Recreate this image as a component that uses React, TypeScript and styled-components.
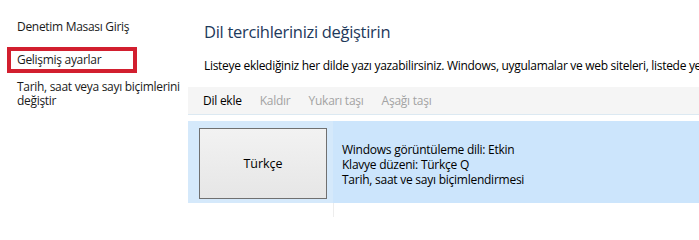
import styled, { createGlobalStyle } from "styled-components";

const GlobalStyle = createGlobalStyle`
  html, body {
    margin: 0;
    padding: 0;
    background: #ffffff;
  }
  body {
    font-family: "Open Sans", "Noto Sans", "Liberation Sans", sans-serif;
    font-size: 12px;
    color: #000000;
  }
`;

const Page = styled.div`
  width: 699px;
  height: 217px;
  overflow: hidden;
  display: grid;
  grid-template-columns: 188px 1fr;
`;

const Nav = styled.nav`
  display: flex;
  flex-direction: column;
  padding-top: 20px;
`;

const NavLink = styled.div<{ $highlighted?: boolean }>`
  font-size: 12px;
  line-height: 14px;
  color: #1a1a1a;
  letter-spacing: -0.3px;
  padding-left: ${(p) => (p.$highlighted ? "6px" : "17px")};
  ${(p) =>
    p.$highlighted
      ? `
    margin: 13px 0 0 7px;
    width: 130px;
    height: 26px;
    box-sizing: border-box;
    border: 4px solid #d21f2f;
    display: flex;
    align-items: center;
  `
      : ""}
`;

const WrapLink = styled(NavLink)`
  margin-top: 7px;
  width: 170px;
`;

const Content = styled.main`
  display: flex;
  flex-direction: column;
  min-width: 0;
`;

const Title = styled.h1`
  margin: 22px 0 0 16px;
  font-size: 16.5px;
  line-height: 20px;
  font-weight: 400;
  color: #1e395b;
  letter-spacing: -0.3px;
`;

const Intro = styled.p`
  margin: 16px 0 0 16px;
  line-height: 15px;
  white-space: nowrap;
  letter-spacing: -0.3px;
`;

const Toolbar = styled.div`
  margin-top: 14px;
  height: 27px;
  background: #f5f5f5;
  border-bottom: 1px solid #dce9f2;
  display: flex;
  align-items: center;
  gap: 18px;
  padding-left: 15px;
`;

const ToolButton = styled.span<{ $disabled?: boolean }>`
  color: ${(p) => (p.$disabled ? "#a3a3a3" : "#000000")};
  letter-spacing: -0.25px;
`;

const Table = styled.div`
  margin-top: 6px;
  flex: 1;
  display: grid;
  grid-template-columns: 145px 1fr;
  grid-template-rows: 82px 1fr;
`;

const LangCell = styled.div`
  background: #d5e9fb;
  padding: 7px 6px 4px 11px;
  display: flex;
`;

const InfoCell = styled.div`
  background: #cce5fc;
  padding: 21px 0 0 9px;
  display: flex;
  flex-direction: column;
`;

const InfoLine = styled.div`
  line-height: 15px;
  white-space: nowrap;
  letter-spacing: -0.25px;
`;

const LangButton = styled.div`
  width: 128px;
  height: 71px;
  box-sizing: border-box;
  border: 1px solid #707070;
  background: linear-gradient(#f2f2f2, #e6e6e6);
  display: flex;
  align-items: center;
  justify-content: center;
  font-size: 12.5px;
`;

const EmptyCell = styled.div<{ $divider?: boolean }>`
  border-left: ${(p) => (p.$divider ? "1px solid #ededed" : "none")};
`;

export default function App() {
  return (
    <>
      <GlobalStyle />
      <Page>
        <Nav>
          <NavLink>Denetim Masası Giriş</NavLink>
          <NavLink $highlighted>Gelişmiş ayarlar</NavLink>
          <WrapLink>Tarih, saat veya sayı biçimlerini değiştir</WrapLink>
        </Nav>
        <Content>
          <Title>Dil tercihlerinizi değiştirin</Title>
          <Intro>
            Listeye eklediğiniz her dilde yazı yazabilirsiniz. Windows, uygulamalar ve web siteleri, listede yer alan ilk dili kullanır.
          </Intro>
          <Toolbar>
            <ToolButton>Dil ekle</ToolButton>
            <ToolButton $disabled>Kaldır</ToolButton>
            <ToolButton $disabled>Yukarı taşı</ToolButton>
            <ToolButton $disabled>Aşağı taşı</ToolButton>
          </Toolbar>
          <Table>
            <LangCell>
              <LangButton>Türkçe</LangButton>
            </LangCell>
            <InfoCell>
              <InfoLine>Windows görüntüleme dili: Etkin</InfoLine>
              <InfoLine>Klavye düzeni: Türkçe Q</InfoLine>
              <InfoLine>Tarih, saat ve sayı biçimlendirmesi</InfoLine>
            </InfoCell>
            <EmptyCell />
            <EmptyCell $divider />
          </Table>
        </Content>
      </Page>
    </>
  );
}
